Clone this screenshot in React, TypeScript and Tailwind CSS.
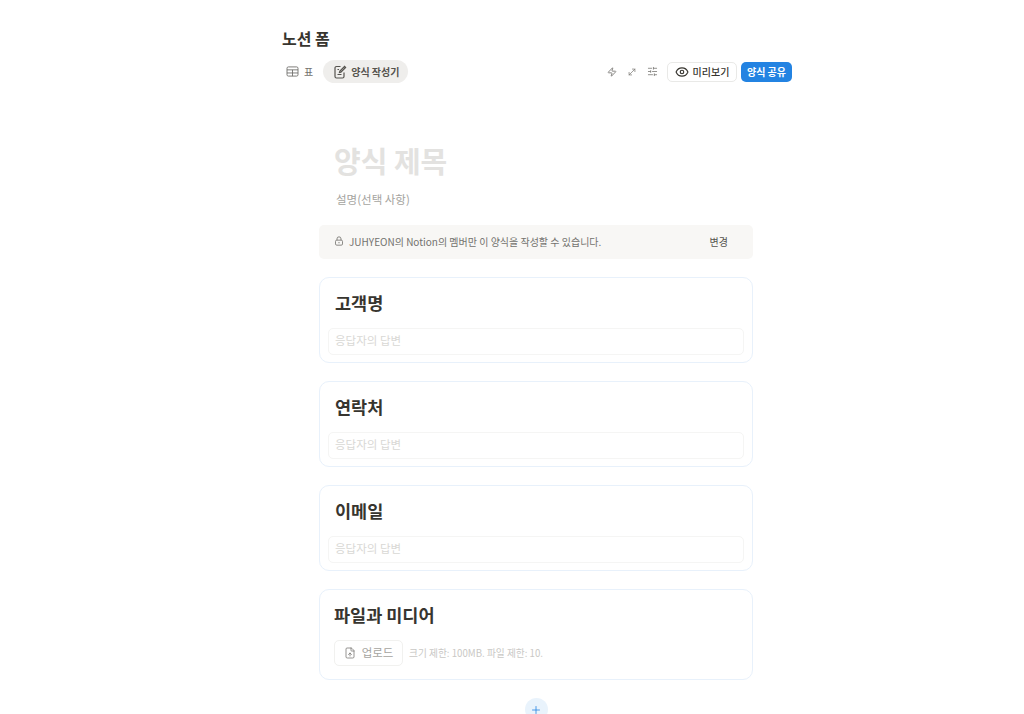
import { Eye, FileUp, MoveDiagonal, Plus, SlidersHorizontal, Zap } from "lucide-react";

const font = "font-['Noto_Sans_CJK_KR','Noto_Sans',sans-serif]";

function TableIcon() {
  return (
    <svg viewBox="0 0 14 12" fill="none" stroke="currentColor" strokeWidth="1" className="h-[11px] w-[13px]">
      <rect x="1" y="1" width="12" height="10" rx="1.5" />
      <path d="M1 4.2h12M1 7.6h12M7 4.2V11" />
    </svg>
  );
}

function FormIcon() {
  return (
    <svg viewBox="0 0 14 14" fill="none" stroke="currentColor" strokeWidth="1.2" className="h-[14px] w-[14px]">
      <path d="M7.5 1.5H3.5a1.5 1.5 0 0 0-1.5 1.5v8.5A1.5 1.5 0 0 0 3.5 13h6a1.5 1.5 0 0 0 1.5-1.5V7.5" />
      <path d="M11.6 1.4l1 1-4.7 4.7-1.4.4.4-1.4z" />
      <path d="M4.5 9.5h4M4.5 4.5h1.5" />
    </svg>
  );
}

function LockIcon() {
  return (
    <svg viewBox="0 0 12 12" fill="none" stroke="currentColor" strokeWidth="1" className="h-[10px] w-[10px]">
      <rect x="1.8" y="5" width="8.4" height="6" rx="1.5" />
      <path d="M3.6 5V3.4a2.4 2.4 0 0 1 4.8 0V5" />
      <circle cx="6" cy="8" r="0.7" fill="currentColor" stroke="none" />
    </svg>
  );
}

function Question({ title }: { title: string }) {
  return (
    <div className="h-[86px] rounded-[10px] border border-[#e8f1fb] bg-white px-2 pt-[12px]">
      <h2 className="h-[26px] pl-[7px] text-[17.5px] leading-[26px] font-semibold text-[#37352f]">{title}</h2>
      <div className="mt-[12px] flex h-[27px] items-center rounded-[5px] border border-[#f5f5f4] pb-[1px] pl-[6px] text-[11.5px] text-[#d9d8d5]">
        응답자의 답변
      </div>
    </div>
  );
}

export default function App() {
  return (
    <div className={`${font} h-[714px] overflow-hidden bg-white pt-[27px] pl-[282px]`}>
      <div className="w-[510px]">
        <h1 className="h-[22px] text-[16px] leading-[22px] font-semibold text-[#37352f]">노션 폼</h1>

        <div className="mt-[11px] flex h-[23px] items-center justify-between">
          <div className="flex items-center">
            <div className="flex items-center gap-[5px] pl-[4px] text-[10px] text-[#73726e]">
              <TableIcon />
              <span>표</span>
            </div>
            <div className="ml-[10px] flex h-[23px] w-[85px] items-center gap-[4px] rounded-full bg-[#efeeec] pl-[10px] text-[10px] font-semibold text-[#55534e]">
              <FormIcon />
              <span>양식 작성기</span>
            </div>
          </div>

          <div className="flex items-center text-[#7d7c78]">
            <Zap className="ml-[2px] h-[10px] w-[10px]" strokeWidth={2.2} />
            <MoveDiagonal className="ml-[10px] h-[10px] w-[10px]" strokeWidth={1.8} />
            <SlidersHorizontal className="ml-[10px] h-[11px] w-[11px]" strokeWidth={1.8} />
            <div className="ml-[9px] flex h-[20px] w-[70px] items-center justify-center gap-[4px] rounded-[5px] border border-[#e9e9e7] text-[10px] font-medium text-[#37352f]">
              <Eye className="h-[14px] w-[14px]" strokeWidth={2} />
              <span>미리보기</span>
            </div>
            <div className="ml-[4px] flex h-[20px] w-[51px] items-center justify-center rounded-[5px] bg-[#2383e2] text-[10px] font-semibold text-white">
              양식 공유
            </div>
          </div>
        </div>

        <div className="mt-[58px] ml-[37px] w-[434px]">
          <div className="h-[38px] pl-[15px] text-[29px] leading-[38px] font-semibold text-[#e3e2e0]">양식 제목</div>
          <div className="mt-[11px] h-[18px] pl-[17px] text-[11.5px] leading-[18px] text-[#a5a4a0]">설명(선택 사항)</div>

          <div className="mt-[17px] flex h-[34px] items-center justify-between rounded-[5px] bg-[#f8f7f5] pr-[25px] pb-[2px] pl-[15px] text-[10px] text-[#73726e]">
            <div className="flex items-center gap-[5px]">
              <LockIcon />
              <span>JUHYEON의 Notion의 멤버만 이 양식을 작성할 수 있습니다.</span>
            </div>
            <span className="text-[#55534e]">변경</span>
          </div>

          <div className="mt-[18px] flex flex-col gap-[18px]">
            <Question title="고객명" />
            <Question title="연락처" />
            <Question title="이메일" />

            <div className="h-[91px] rounded-[10px] border border-[#e8f1fb] bg-white px-[14px] pt-[12px]">
              <h2 className="h-[26px] text-[17.5px] leading-[26px] font-semibold text-[#37352f]">파일과 미디어</h2>
              <div className="mt-[12px] flex items-center">
                <div className="flex h-[26px] w-[69px] items-center justify-center gap-[6px] rounded-[5px] border border-[#f1f1ef] text-[11.5px] text-[#a5a4a0]">
                  <FileUp className="h-[12px] w-[12px] text-[#73726e]" strokeWidth={1.5} />
                  <span>업로드</span>
                </div>
                <span className="ml-[6px] text-[9.7px] text-[#c9c8c5]">크기 제한: 100MB. 파일 제한: 10.</span>
              </div>
            </div>
          </div>

          <div className="mt-[18px] flex justify-center">
            <div className="flex h-[23px] w-[23px] items-center justify-center rounded-full bg-[#e9f3fc] text-[#2383e2]">
              <Plus className="h-[12px] w-[12px]" strokeWidth={1.6} />
            </div>
          </div>
        </div>
      </div>
    </div>
  );
}
